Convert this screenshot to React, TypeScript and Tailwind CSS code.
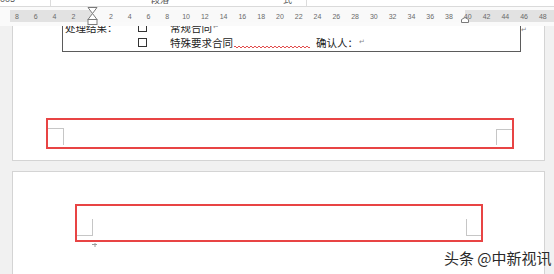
import React from "react";

const rulerNums = ["8", "6", "4", "2", "", "2", "4", "6", "8", "10", "12", "14", "16", "18", "20", "22", "24", "26", "28", "30", "32", "34", "36", "38", "40", "42", "44", "46", "48"];

function IndentMarker() {
  return (
    <svg width="11" height="18" viewBox="0 0 11 18" className="shrink-0">
      <path d="M1 0.5 H10 L5.5 6.5 Z" fill="#fff" stroke="#7a7a7a" strokeWidth="1" />
      <path d="M5.5 6.5 L10 12.5 H1 Z" fill="#fff" stroke="#7a7a7a" strokeWidth="1" />
      <rect x="1" y="12.5" width="9" height="5" fill="#fff" stroke="#7a7a7a" strokeWidth="1" />
    </svg>
  );
}

function CheckBox() {
  return <span className="w-[9px] h-[9px] shrink-0 border border-[#333]" />;
}

function ParaMark() {
  return <span className="text-[7px] leading-[7px] text-[#8a8a8a] font-['DejaVu_Sans',sans-serif] self-start mt-[4px] ml-[1px]">↵</span>;
}

function Squiggle() {
  let d = "M0 2";
  for (let x = 0; x < 76; x += 4) d += ` Q${x + 1} 0 ${x + 2} 2 T${x + 4} 2`;
  return (
    <svg width="76" height="4" viewBox="0 0 76 4" className="self-end mb-[1px] ml-[1px] mr-[6px] shrink-0">
      <path d={d} fill="none" stroke="#e24b4b" strokeWidth="1" />
    </svg>
  );
}

export default function App() {
  return (
    <div className="relative w-[554px] h-[274px] overflow-hidden bg-[#f1f1f1] flex flex-col font-['Noto_Sans_CJK_SC',sans-serif]">
      {/* ribbon group labels, cut off at top */}
      <div className="h-[7px] shrink-0 flex bg-white border-b border-[#dadada] text-[9px] leading-[9px] text-[#555]">
        <div className="w-[51px] overflow-hidden border-r border-[#dcdcdc]">
          <span className="block -mt-[5px] font-['Liberation_Sans',sans-serif]">005</span>
        </div>
        <div className="w-[256px] overflow-hidden border-r border-[#dcdcdc] flex">
          <span className="block -mt-[5px] ml-[100px]">段落</span>
          <span className="block -mt-[5px] ml-[114px]">式</span>
        </div>
      </div>

      {/* ruler */}
      <div className="h-[19px] shrink-0 bg-[#fafafa] pt-[3px] pl-[10px]">
        <div className="relative h-[12px] flex items-center bg-[linear-gradient(to_right,#e2e2e2_82px,#f9f9f9_82px,#f9f9f9_455px,#e2e2e2_455px)]">
          <div className="flex items-center -ml-[2.4px]">
            {rulerNums.map((n, i) => (
              <div key={i} className="w-[18.79px] h-[12px] shrink-0 flex items-center justify-center text-[7px] leading-none text-[#6a6a6a] font-['Liberation_Sans',sans-serif]">
                {n === "" ? <IndentMarker /> : n}
              </div>
            ))}
          </div>
          <svg width="8" height="6" viewBox="0 0 8 6" className="absolute left-[451px] top-[7px]">
            <path d="M0.5 5.5 V2.5 L4 0.5 L7.5 2.5 V5.5 Z" fill="#fff" stroke="#7a7a7a" strokeWidth="1" />
          </svg>
        </div>
      </div>

      {/* document */}
      <div className="flex-1 min-h-0 overflow-hidden">
        {/* page 1 */}
        <div className="ml-[12px] w-[533px] h-[135px] bg-white border-x border-b border-[#d4d4d4]">
          <div className="flex items-start">
            <div className="ml-[49px] w-[459px] border-x border-b border-[#5b5b5b] pb-[1px] text-[10.5px] leading-[15px] text-[#222]">
              <div className="-mt-[6px]">
                <div className="flex h-[15px] items-center pl-[2px]">
                  <span className="w-[73px] shrink-0">处理结果：</span>
                  <CheckBox />
                  <span className="ml-[23px]">常规合同</span>
                  <ParaMark />
                </div>
                <div className="flex h-[15px] items-center pl-[2px]">
                  <span className="w-[73px] shrink-0" />
                  <CheckBox />
                  <span className="ml-[23px]">特殊要求合同</span>
                  <Squiggle />
                  <span>确认人：</span>
                  <ParaMark />
                </div>
              </div>
            </div>
            <span className="mt-[1px] text-[7px] leading-[7px] text-[#8a8a8a] font-['DejaVu_Sans',sans-serif]">↵</span>
          </div>

          <div className="mt-[66px] ml-[33px] w-[468px] h-[31px] border-2 border-[#e84444] flex justify-between items-start">
            <div className="w-[16px] h-[17px] mt-[8px] border-t border-r border-[#c6c6c6]" />
            <div className="w-[16px] h-[16px] mt-[9px] border-t border-l border-[#c6c6c6]" />
          </div>
        </div>

        {/* page 2 */}
        <div className="mt-[10px] ml-[12px] w-[533px] h-[200px] bg-white border-x border-t border-[#d4d4d4]">
          <div className="mt-[32px] ml-[62px] w-[408px] h-[38px] border-2 border-[#e84444] flex justify-between items-start">
            <div className="w-[16px] h-[17px] mt-[13px] border-r border-b border-[#c6c6c6]" />
            <div className="w-[15px] h-[17px] mt-[13px] border-l border-b border-[#c6c6c6]" />
          </div>
          <svg width="6" height="4" viewBox="0 0 6 4" className="ml-[79px] mt-[1px]">
            <path d="M0 1.5 H5 M3 0 V4" stroke="#9a9a9a" strokeWidth="1" />
          </svg>
        </div>
      </div>

      <div className="absolute left-[444px] top-[248px] whitespace-nowrap text-[15px] leading-[20px] text-[#2a2a2a] [text-shadow:0_0_2px_#fff]">
        头条 @中新视讯
      </div>
    </div>
  );
}
